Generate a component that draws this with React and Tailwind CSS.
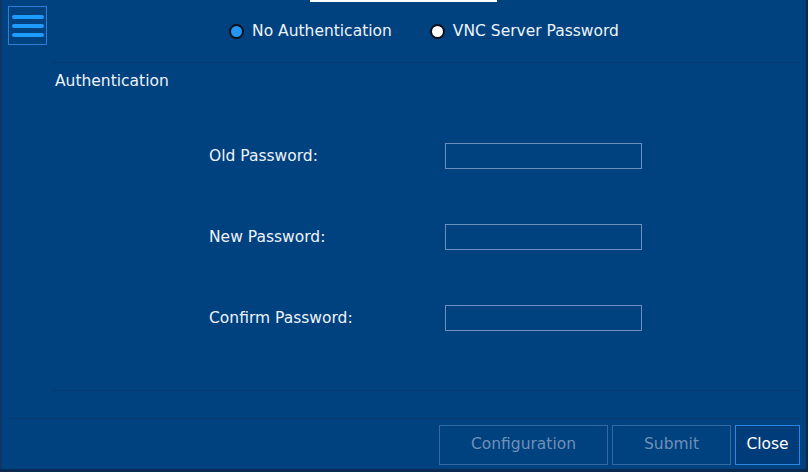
const font = { fontFamily: '"DejaVu Sans", Verdana, sans-serif' };

function Radio({ checked, label }) {
  return (
    <label className="flex items-center gap-[8px] text-[15.5px] text-[#eef3fa]">
      <span
        className={
          "w-[15px] h-[15px] rounded-full border-[2px] border-[#0a0f1a] " +
          (checked ? "bg-[#2196f3]" : "bg-white")
        }
      />
      {label}
    </label>
  );
}

function Field({ label }) {
  return (
    <div className="flex items-center h-[26px]">
      <span className="w-[236px] text-[15.5px] text-[#eef3fa]">{label}</span>
      <input
        type="password"
        className="w-[197px] h-[26px] bg-transparent border border-[#6c8fbd] outline-none"
      />
    </div>
  );
}

export default function App() {
  return (
    <div
      className="relative w-[808px] h-[472px] overflow-hidden bg-[#0b2a52]"
      style={font}
    >
      <div className="w-[806px] h-[469px] bg-[#00417f] border-l-[2px] border-l-[#0d3565] border-r border-r-[#0c3a70] flex flex-col">
        <div className="absolute top-0 left-[310px] w-[187px] h-[2px] bg-white" />

        <header className="flex items-start h-[62px]">
          <button className="mt-[6px] ml-[6px] w-[39px] h-[39px] border border-[#2a80d8] flex flex-col items-center justify-center gap-[5px]">
            <span className="w-[32px] h-[4px] rounded-full bg-[#1e9bff]" />
            <span className="w-[32px] h-[4px] rounded-full bg-[#1e9bff]" />
            <span className="w-[32px] h-[4px] rounded-full bg-[#1e9bff]" />
          </button>
          <div className="flex-1 flex justify-center gap-[38px] pt-[20px] pr-[4px]">
            <Radio checked label="No Authentication" />
            <Radio label="VNC Server Password" />
          </div>
        </header>

        <main className="ml-[50px] mr-[5px] h-[329px] border-t border-b border-[#07396f]">
          <h2 className="pl-[3px] pt-[7px] text-[15.5px] text-[#eef3fa]">
            Authentication
          </h2>
          <div className="flex flex-col gap-[55px] pl-[157px] pt-[50px]">
            <Field label="Old Password:" />
            <Field label="New Password:" />
            <Field label="Confirm Password:" />
          </div>
        </main>

        <footer className="mt-[27px] mx-[6px] mr-[5px] border-t border-[#07396f] flex justify-end gap-[4px] pt-[6px]">
          <button
            disabled
            className="w-[169px] h-[40px] border border-[#3569a3] text-[15.5px] text-[#6f90b8]"
          >
            Configuration
          </button>
          <button
            disabled
            className="w-[119px] h-[40px] border border-[#3569a3] text-[15.5px] text-[#6f90b8]"
          >
            Submit
          </button>
          <button className="w-[65px] h-[40px] border border-[#2a86e2] bg-[#003c7a] text-[15.5px] text-white">
            Close
          </button>
        </footer>
      </div>
    </div>
  );
}
